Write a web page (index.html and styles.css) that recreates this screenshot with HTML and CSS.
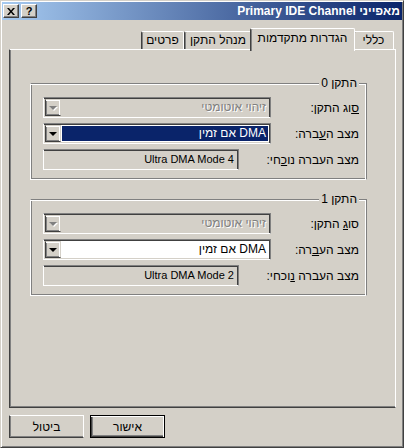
FILE: index.html
```html
<!DOCTYPE html>
<html lang="he" dir="rtl">
<head>
<meta charset="utf-8">
<title>מאפייני Primary IDE Channel</title>
<link rel="stylesheet" href="styles.css">
</head>
<body>
<div class="window">
  <div class="titlebar">
    <span class="title">מאפייני Primary IDE Channel</span>
    <div class="tb-buttons">
      <span class="tb-btn tb-help">?</span>
      <span class="tb-btn tb-close"><svg width="8" height="7" viewBox="0 0 8 7"><path d="M0 0h2l2 2.5L6 0h2L5 3.5 8 7H6L4 4.5 2 7H0l3-3.5z" fill="#000"/></svg></span>
    </div>
  </div>
  <div class="content">
    <div class="tabs">
      <div class="tab tab-general">כללי</div>
      <div class="tab tab-adv selected">הגדרות מתקדמות</div>
      <div class="tab tab-driver">מנהל התקן</div>
      <div class="tab tab-details">פרטים</div>
    </div>
    <div class="panel">
      <div class="group">
        <div class="group-title">התקן 0</div>
        <div class="row">
          <span class="label"><u>ס</u>וג התקן:</span>
          <div class="combo disabled">
            <div class="combo-text"><span>זיהוי אוטומטי</span></div>
            <div class="combo-btn"><span class="arrow"></span></div>
          </div>
        </div>
        <div class="row">
          <span class="label">מצב ה<u>ע</u>ברה:</span>
          <div class="combo">
            <div class="combo-text sel"><span>DMA אם זמין</span></div>
            <div class="combo-btn"><span class="arrow"></span></div>
          </div>
        </div>
        <div class="row">
          <span class="label">מצב העברה נו<u>כ</u>חי:</span>
          <div class="field">Ultra DMA Mode 4</div>
        </div>
      </div>
      <div class="group">
        <div class="group-title">התקן 1</div>
        <div class="row">
          <span class="label">סו<u>ג</u> התקן:</span>
          <div class="combo disabled">
            <div class="combo-text"><span>זיהוי אוטומטי</span></div>
            <div class="combo-btn"><span class="arrow"></span></div>
          </div>
        </div>
        <div class="row">
          <span class="label">מצב הע<u>ב</u>רה:</span>
          <div class="combo">
            <div class="combo-text"><span>DMA אם זמין</span></div>
            <div class="combo-btn"><span class="arrow"></span></div>
          </div>
        </div>
        <div class="row">
          <span class="label">מצב העברה <u>נ</u>וכחי:</span>
          <div class="field">Ultra DMA Mode 2</div>
        </div>
      </div>
    </div>
    <div class="buttons">
      <div class="btn default">אישור</div>
      <div class="btn">ביטול</div>
    </div>
  </div>
</div>
</body>
</html>
```
FILE: styles.css
```css
* { box-sizing: border-box; }
html, body { margin: 0; padding: 0; }
body {
  background: #d4d0c8;
  font-family: "Liberation Sans", "DejaVu Sans", sans-serif;
  font-size: 12px;
  color: #000;
}
.window {
  width: 404px;
  height: 448px;
  border: 1px solid;
  border-color: #d4d0c8 #404040 #404040 #d4d0c8;
  box-shadow: inset 1px 1px #fff, inset -1px -1px #808080;
  padding: 1px;
  display: flex;
  flex-direction: column;
}
.titlebar {
  height: 18px;
  background: linear-gradient(to left, #0a246a, #a6caf0);
  display: flex;
  align-items: center;
  padding: 0 2px 0 1px;
  flex: none;
}
.title {
  color: #fff;
  font-weight: bold;
  font-size: 12px;
  white-space: nowrap;
}
.tb-buttons {
  margin-right: auto;
  display: flex;
  gap: 2px;
}
.tb-btn {
  width: 16px;
  height: 14px;
  background: #d4d0c8;
  border: 1px solid;
  border-color: #fff #404040 #404040 #fff;
  box-shadow: inset -1px -1px #808080;
  display: flex;
  align-items: center;
  justify-content: center;
  font-weight: bold;
  font-size: 11px;
  line-height: 12px;
}
.content {
  flex: 1;
  padding: 8px 6px 0 7px;
  display: flex;
  flex-direction: column;
}
.tabs {
  height: 21px;
  display: flex;
  align-items: flex-end;
  padding-right: 2px;
  flex: none;
}
.tab {
  height: 18px;
  border-top: 1px solid #fff;
  border-right: 1px solid #fff;
  border-left: 1px solid #404040;
  box-shadow: inset 1px 0 #808080;
  border-radius: 2px 2px 0 0;
  display: flex;
  align-items: center;
  justify-content: center;
  white-space: nowrap;
  background: #d4d0c8;
  padding-bottom: 1px;
}
.tab-general { width: 41px; }
.tab-adv { width: 101px; }
.tab-driver { width: 68px; }
.tab-details { width: 43px; }
.tab.selected {
  width: 105px;
  height: 23px;
  margin: 0 -2px -2px -2px;
  position: relative;
  z-index: 1;
  padding-bottom: 4px;
}
.panel {
  height: 359px;
  border: 1px solid;
  border-color: #fff #fff #404040 #404040;
  box-shadow: inset 1px -1px #808080;
  padding-top: 33px;
  flex: none;
}
.group {
  position: relative;
  width: 337px;
  margin: 0 28px 0 0;
  border: 1px solid;
  border-color: #808080 #808080 #fff #fff;
  box-shadow: inset -1px 1px #fff, inset 1px -1px #808080;
  padding: 13px 7px 9px 12px;
}
.group + .group { margin-top: 19px; }
.group-title {
  position: absolute;
  top: -7px;
  right: 7px;
  padding: 0 2px;
  background: #d4d0c8;
  line-height: 13px;
}
.row {
  height: 21px;
  display: flex;
  align-items: center;
  justify-content: space-between;
}
.row + .row { margin-top: 5px; }
.label { white-space: nowrap; }
u { text-decoration: underline; }
.combo {
  width: 228px;
  height: 21px;
  border: 1px solid;
  border-color: #808080 #808080 #fff #fff;
  box-shadow: inset -1px 1px #404040, inset 1px -1px #d4d0c8;
  padding: 1px;
  display: flex;
  background: #fff;
}
.combo.disabled { background: #d4d0c8; }
.combo-text {
  flex: 1;
  padding: 1px;
  display: flex;
}
.combo-text span {
  flex: 1;
  padding-right: 2px;
  line-height: 15px;
  white-space: nowrap;
}
.combo-text.sel span {
  background: #0a246a;
  color: #fff;
}
.combo.disabled .combo-text span {
  color: #808080;
  text-shadow: 1px 1px #fff;
}
.combo-btn {
  width: 16px;
  height: 17px;
  flex: none;
  background: #d4d0c8;
  border: 1px solid;
  border-color: #d4d0c8 #d4d0c8 #404040 #404040;
  box-shadow: inset -1px 1px #fff, inset 1px -1px #808080;
  display: flex;
  align-items: center;
  justify-content: center;
}
.arrow {
  width: 0;
  height: 0;
  border-left: 4px solid transparent;
  border-right: 4px solid transparent;
  border-top: 4px solid #000;
  margin-top: 1px;
}
.combo.disabled .arrow {
  border-top-color: #808080;
  filter: drop-shadow(1px 1px 0 #fff);
}
.field {
  width: 196px;
  height: 21px;
  border: 1px solid;
  border-color: #808080 #808080 #fff #fff;
  box-shadow: inset -1px 1px #404040, inset 1px -1px #d4d0c8;
  padding: 0 4px 0 0;
  line-height: 19px;
  font-size: 11px;
  white-space: nowrap;
}
.buttons {
  margin-top: 7px;
  display: flex;
  justify-content: flex-end;
  gap: 6px;
}
.btn {
  width: 75px;
  height: 23px;
  border: 1px solid;
  border-color: #fff #fff #404040 #404040;
  box-shadow: inset 1px -1px #808080;
  display: flex;
  align-items: center;
  justify-content: center;
}
.btn.default {
  border-color: #000;
  box-shadow: inset -1px 1px #fff, inset 1px -1px #404040, inset 2px -2px #808080;
}
```
